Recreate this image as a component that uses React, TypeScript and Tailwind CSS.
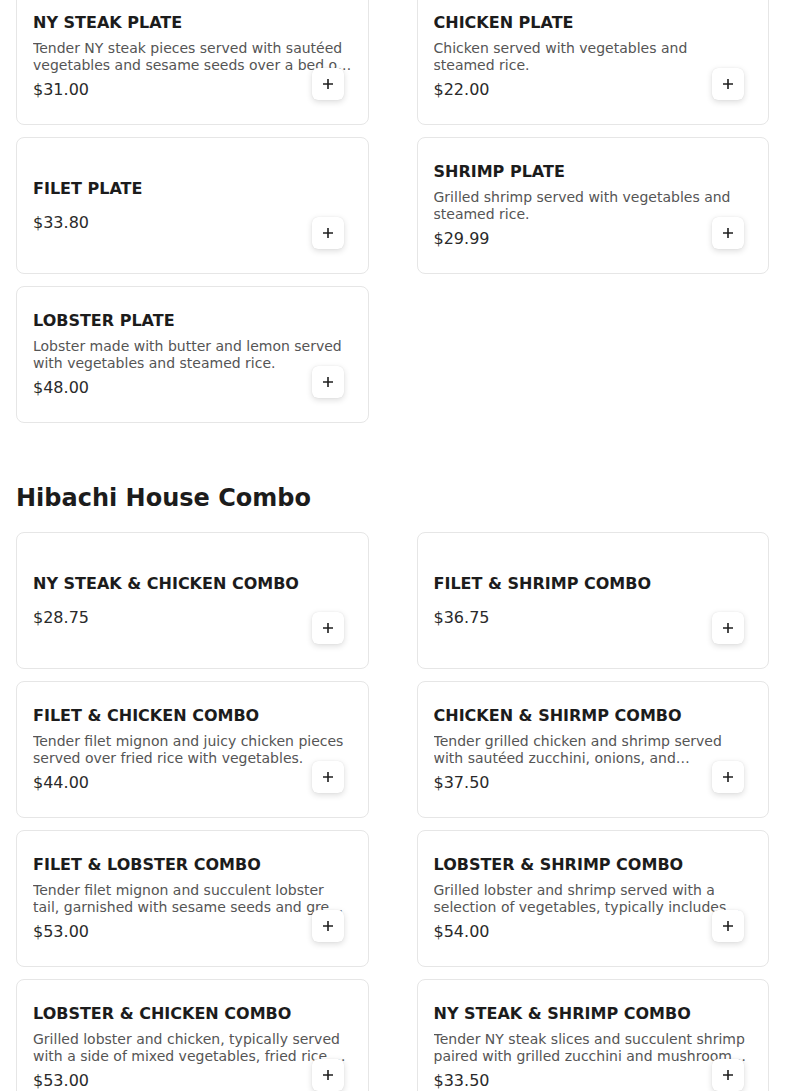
import React from "react";

type Item = { name: string; desc?: string; price: string };

const plates: Item[] = [
  { name: "NY STEAK PLATE", desc: "Tender NY steak pieces served with sautéed vegetables and sesame seeds over a bed of fried rice.", price: "$31.00" },
  { name: "CHICKEN PLATE", desc: "Chicken served with vegetables and steamed rice.", price: "$22.00" },
  { name: "FILET PLATE", price: "$33.80" },
  { name: "SHRIMP PLATE", desc: "Grilled shrimp served with vegetables and steamed rice.", price: "$29.99" },
  { name: "LOBSTER PLATE", desc: "Lobster made with butter and lemon served with vegetables and steamed rice.", price: "$48.00" },
];

const combos: Item[] = [
  { name: "NY STEAK & CHICKEN COMBO", price: "$28.75" },
  { name: "FILET & SHRIMP COMBO", price: "$36.75" },
  { name: "FILET & CHICKEN COMBO", desc: "Tender filet mignon and juicy chicken pieces served over fried rice with vegetables.", price: "$44.00" },
  { name: "CHICKEN & SHIRMP COMBO", desc: "Tender grilled chicken and shrimp served with sautéed zucchini, onions, and mushrooms.", price: "$37.50" },
  { name: "FILET & LOBSTER COMBO", desc: "Tender filet mignon and succulent lobster tail, garnished with sesame seeds and green onions, served with fried rice.", price: "$53.00" },
  { name: "LOBSTER & SHRIMP COMBO", desc: "Grilled lobster and shrimp served with a selection of vegetables, typically includes zucchini, onions, and mushrooms.", price: "$54.00" },
  { name: "LOBSTER & CHICKEN COMBO", desc: "Grilled lobster and chicken, typically served with a side of mixed vegetables, fried rice, and noodles.", price: "$53.00" },
  { name: "NY STEAK & SHRIMP COMBO", desc: "Tender NY steak slices and succulent shrimp paired with grilled zucchini and mushrooms, served with rice.", price: "$33.50" },
];

function Plus() {
  return (
    <svg width="12" height="12" viewBox="0 0 12 12" fill="none">
      <path d="M6 1v10M1 6h10" stroke="#1f1f1f" strokeWidth="1.6" strokeLinecap="butt" />
    </svg>
  );
}

function Card({ item }: { item: Item }) {
  return (
    <div className="relative h-[137px] rounded-lg border border-[#e6e6e6] bg-white px-4 flex flex-col justify-center">
      <div className="text-base leading-6 font-bold text-[#1c1c1c]">{item.name}</div>
      {item.desc ? (
        <>
          <div className="mt-[5px] text-sm leading-[17px] text-[#555555] line-clamp-2">{item.desc}</div>
          <div className="mt-[4px] text-base leading-6 text-[#2a2a2a]">{item.price}</div>
        </>
      ) : (
        <div className="mt-[10px] text-base leading-6 text-[#2a2a2a]">{item.price}</div>
      )}
      <button className="absolute right-6 bottom-6 w-8 h-8 rounded-md bg-white flex items-center justify-center shadow-[0_2px_6px_rgba(0,0,0,0.14),0_0_1px_rgba(0,0,0,0.12)]">
        <Plus />
      </button>
    </div>
  );
}

export default function App() {
  return (
    <div className="min-h-screen bg-white font-['DejaVu_Sans',sans-serif] px-4 overflow-hidden">
      <div className="-mt-[12px] grid grid-cols-2 gap-x-12 gap-y-3">
        {plates.map((p) => (
          <Card key={p.name} item={p} />
        ))}
      </div>
      <h2 className="mt-[59px] mb-[18px] text-2xl leading-8 font-bold text-[#1c1c1c]">Hibachi House Combo</h2>
      <div className="grid grid-cols-2 gap-x-12 gap-y-3 pb-10">
        {combos.map((p) => (
          <Card key={p.name} item={p} />
        ))}
      </div>
    </div>
  );
}
